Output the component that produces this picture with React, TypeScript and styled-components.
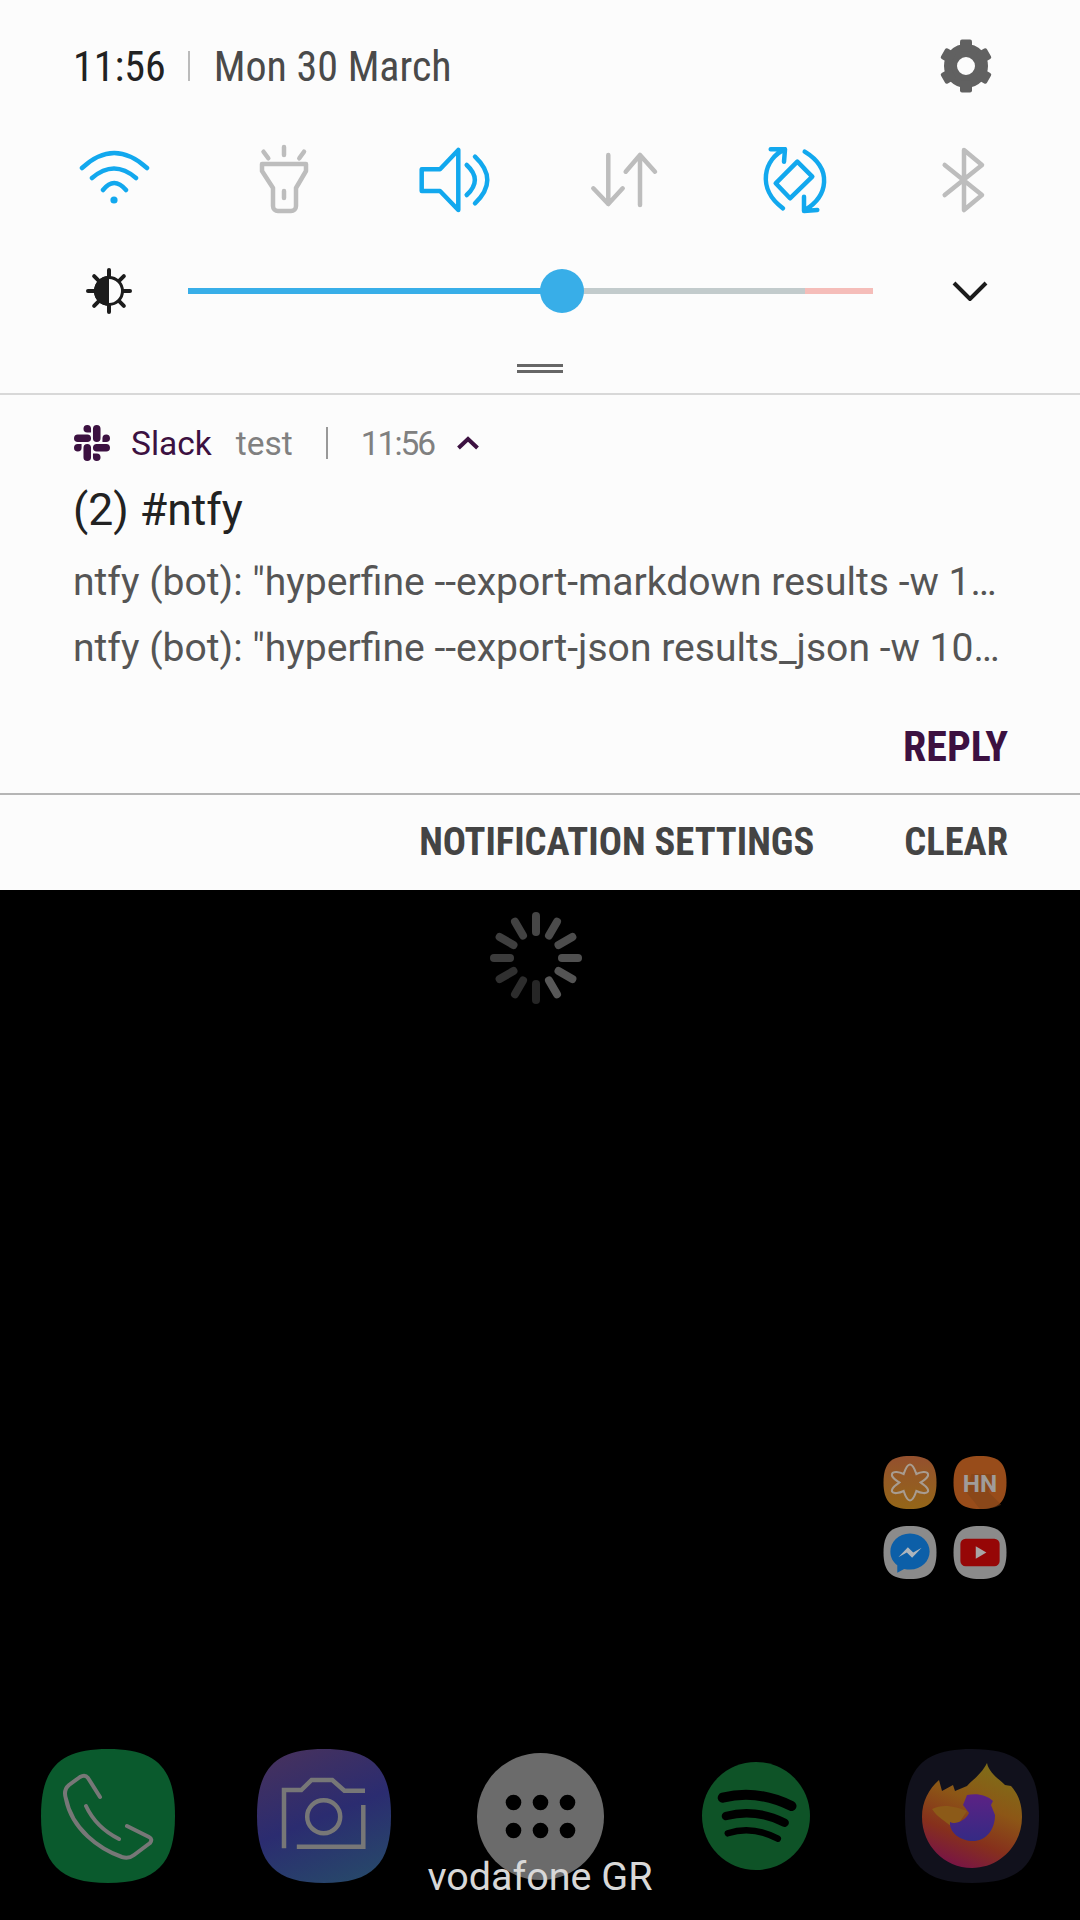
import React from "react";
import styled, { createGlobalStyle } from "styled-components";
import { SiSlack } from "react-icons/si";

const Global = createGlobalStyle`
  html, body { margin: 0; padding: 0; background: #000; }
  body { font-family: Roboto, "Liberation Sans", sans-serif; }
`;

const Screen = styled.div`
  width: 1080px;
  height: 1920px;
  display: flex;
  flex-direction: column;
  overflow: hidden;
  position: relative;
`;

const Panel = styled.section`
  height: 890px;
  background: #fcfcfc;
  display: flex;
  flex-direction: column;
`;

const Quick = styled.div`
  height: 393px;
  border-bottom: 2px solid #d8d8d8;
  display: flex;
  flex-direction: column;
`;

const StatusRow = styled.div`
  height: 132px;
  display: flex;
  align-items: center;
  padding: 0 88px 0 73px;
`;

const Clock = styled.span`
  font-family: "Roboto Condensed", Roboto, sans-serif;
  font-stretch: 75%;
  font-size: 42px;
  color: #222;
`;

const ThinBar = styled.span`
  width: 2px;
  height: 30px;
  background: #bbb;
  margin: 0 24px 0 22px;
`;

const DateText = styled.span`
  font-family: "Roboto Condensed", Roboto, sans-serif;
  font-stretch: 75%;
  font-size: 42px;
  color: #4a4a4a;
  flex: 1;
`;

const ToggleRow = styled.div`
  display: grid;
  grid-template-columns: repeat(6, 170px);
  padding-left: 29px;
  margin-top: 12px;
  height: 72px;
`;

const ToggleCell = styled.div`
  display: flex;
  justify-content: center;
`;

const BrightnessRow = styled.div`
  height: 60px;
  margin-top: 45px;
  display: flex;
  align-items: center;
  padding-left: 86px;
`;

const Track = styled.div`
  position: relative;
  width: 685px;
  height: 6px;
  margin: 0 79px 0 56px;
  flex: none;
  background: linear-gradient(
    to right,
    #38aee8 0 374px,
    #c2cbcc 374px 617px,
    #f5bdb9 617px 685px
  );
`;

const Thumb = styled.span`
  position: absolute;
  left: 352px;
  top: -19px;
  width: 44px;
  height: 44px;
  border-radius: 50%;
  background: #38aee8;
`;

const HandleWrap = styled.div`
  margin-top: 43px;
  display: flex;
  justify-content: center;
`;

const Handle = styled.span`
  width: 46px;
  height: 3px;
  border-top: 3px solid #666;
  border-bottom: 3px solid #666;
`;

const Note = styled.article`
  height: 398px;
  border-bottom: 2px solid #b5b5b5;
  padding: 0 72px 0 73px;
  box-sizing: content-box;
  display: flex;
  flex-direction: column;
`;

const NoteHead = styled.div`
  display: flex;
  align-items: center;
  height: 48px;
  margin-top: 24px;
  font-size: 33.500px;
`;

const SlackName = styled.span`
  color: #3c1141;
  margin-left: 21px;
`;

const Muted = styled.span`
  color: #808080;
  margin-left: 24px;
`;

const NoteBar = styled.span`
  width: 2px;
  height: 32px;
  background: #999;
  margin: 0 33px 0 33px;
`;

const NoteTime = styled.span`
  color: #808080;
  letter-spacing: -2px;
`;

const Title = styled.h1`
  margin: 18px 0 0;
  font-weight: 400;
  font-size: 44.500px;
  line-height: 50px;
  color: #222;
`;

const Line = styled.p<{ $gap: number }>`
  margin: ${(p) => p.$gap}px 0 0;
  font-size: 39.100px;
  line-height: 44px;
  color: #555;
  white-space: nowrap;
`;

const ReplyRow = styled.div`
  display: flex;
  justify-content: flex-end;
  margin-top: 55px;
`;

const ActionText = styled.span<{ $color: string; $size: number }>`
  font-size: ${(p) => p.$size}px;
  font-weight: 700;
  line-height: 44px;
  color: ${(p) => p.$color};
  font-stretch: 75%;
  font-family: "Roboto Condensed", Roboto, sans-serif;
`;

const Footer = styled.div`
  flex: 1;
  display: flex;
  align-items: center;
  justify-content: flex-end;
  gap: 90px;
  padding: 0 72px 2px 0;
`;

const Lock = styled.section`
  flex: 1;
  background: #000;
  display: flex;
  flex-direction: column;
`;

const SpinnerSvg = styled.svg`
  display: block;
  flex: none;
  margin: 22px 0 0 490px;
`;

const Folder = styled.div`
  margin: 452px 73px 0 auto;
  display: grid;
  grid-template-columns: repeat(2, 54px);
  grid-auto-rows: 53px;
  gap: 17px 16px;
`;

const Dock = styled.div`
  margin-top: 170px;
  height: 134px;
  display: grid;
  grid-template-columns: repeat(5, 216px);
  justify-items: center;
  align-items: center;
`;

const Carrier = styled.div`
  position: absolute;
  left: 0;
  right: 0;
  top: 1853px;
  text-align: center;
  font-size: 39.500px;
  line-height: 48px;
  color: #d8d8d8;
`;

const Squircle = "M50 0C86 0 100 14 100 50S86 100 50 100 0 86 0 50 14 0 50 0Z";

const Blue = { fill: "none", stroke: "#12a8ee", strokeWidth: 4.5, strokeLinecap: "round", strokeLinejoin: "round" } as const;
const Gray = { fill: "none", stroke: "#bdbdbd", strokeWidth: 4.5, strokeLinecap: "round", strokeLinejoin: "round" } as const;

const Gear = () => (
  <svg width="52" height="56" viewBox="-26 -28 52 56">
    <circle r="15.5" fill="none" stroke="#616161" strokeWidth="13" />
    {[0, 60, 120, 180, 240, 300].map((a) => (
      <rect key={a} x="-6" y="-26.5" width="12" height="12" rx="2" fill="#616161" transform={`rotate(${a})`} />
    ))}
  </svg>
);

const Toggles = [
  <svg key="w" width="72" height="72" viewBox="0 0 72 72">
    <path {...Blue} d="M4 24Q36 -6 69 24M14 34Q36 15 58 34M25 46Q36 32 48 46" />
    <circle cx="36" cy="56" r="3.6" fill="#12a8ee" />
  </svg>,
  <svg key="f" width="72" height="72" viewBox="0 0 72 72">
    <path {...Gray} d="M14 20H58V27L48 44V62a5 5 0 0 1-5 5H30a5 5 0 0 1-5-5V44L14 27ZM36 47V54M36 3V11M15.500 7.700L20.300 14.300M56 7.700L51.300 14.300" />
  </svg>,
  <svg key="v" width="72" height="72" viewBox="0 0 72 72">
    <path {...Blue} d="M3.700 25.300H22L40.300 6V66L22 47H3.700ZM48.700 21Q65 36 48.700 51M57 12.700Q81.600 36 57 59.300" />
  </svg>,
  <svg key="a" width="72" height="72" viewBox="0 0 72 72">
    <path {...Gray} d="M20.300 11V60M5.300 44.300L20.300 60 34.700 44.300M52 61V11M37.700 27.700L52 11 67 27.700" />
  </svg>,
  <svg key="r" width="72" height="72" viewBox="0 0 72 72">
    <path {...Blue} d="M27 5.300C6 14 -2 45 25 64.300M12.700 5.300H27L26 17.700M46.700 7.700C75 25 70 52 47 66M46 52.700V67L59.300 66M17.700 39.300L39.300 17.700 54.300 32.700 32 54.300Z" />
  </svg>,
  <svg key="b" width="72" height="72" viewBox="0 0 72 72">
    <path {...Gray} d="M16.700 21L54 51 36 66V6L54 21 16.700 51" />
  </svg>,
];

const BrightnessIcon = () => (
  <svg width="46" height="46" viewBox="-23 -23 46 46">
    <g stroke="#1c1c1c" strokeWidth="4" strokeLinecap="round">
      {[0, 45, 90, 135, 180, 225, 270, 315].map((a) => (
        <line key={a} y1="-14" y2="-21" transform={`rotate(${a})`} />
      ))}
    </g>
    <circle r="13.500" fill="#fcfcfc" stroke="#1c1c1c" strokeWidth="3" />
    <path d="M0 -15A15 15 0 0 0 0 15Z" fill="#1c1c1c" />
  </svg>
);

const Chevron = () => (
  <svg width="36" height="20" viewBox="0 0 36 20">
    <path d="M2 2L18 18 34 2" fill="none" stroke="#1c1c1c" strokeWidth="4" />
  </svg>
);

const UpChevronSvg = styled.svg`
  margin-left: 22px;
`;

const UpChevron = () => (
  <UpChevronSvg width="24" height="14" viewBox="0 0 24 14">
    <path d="M2.500 12L12 3 21.500 12" fill="none" stroke="#3c1141" strokeWidth="4" />
  </UpChevronSvg>
);

const SlackMark = styled(SiSlack)`
  margin-left: 1px;
`;

const Spinner = () => {
  const shades = ["#464646", "#4b4b4b", "#4d4d4d", "#505050", "#545454", "#585858", "#262626", "#2d2d2d", "#303030", "#3b3b3b", "#3f3f3f", "#424242"];
  return (
    <SpinnerSvg width="92" height="92" viewBox="-46 -46 92 92">
      {shades.map((c, i) => (
        <line key={i} y1="-26" y2="-42" stroke={c} strokeWidth="8" strokeLinecap="round" transform={`rotate(${i * 30})`} />
      ))}
    </SpinnerSvg>
  );
};

const Flower = () => (
  <svg width="54" height="53" viewBox="0 0 100 100">
    <defs>
      <linearGradient id="fl" x1="0" y1="0" x2="0" y2="1">
        <stop offset="0" stopColor="#94502e" />
        <stop offset="1" stopColor="#946618" />
      </linearGradient>
    </defs>
    <path d={Squircle} fill="url(#fl)" />
    <path
      d="M50 16C56 16 60 28 62 34C70 30 82 28 84 34C86 41 76 46 70 50C76 55 86 60 84 67C81 72 70 70 62 66C60 72 56 84 50 84C44 84 40 72 38 66C30 70 19 72 16 67C14 60 24 55 30 50C24 46 14 41 16 34C18 28 30 30 38 34C40 28 44 16 50 16Z"
      fill="none"
      stroke="#a89c90"
      strokeWidth="4"
    />
  </svg>
);

const HnSvg = styled.svg`
  display: block;
`;

const HnText = styled.text`
  font-family: Roboto, sans-serif;
  font-weight: 700;
  font-size: 46px;
  fill: #a09c99;
`;

const Hn = () => (
  <HnSvg width="54" height="53" viewBox="0 0 100 100">
    <path d={Squircle} fill="#984c1a" />
    <path d="M24 68L34 34 76 34 66 68 90 92C80 98 65 100 50 100Z" fill="#7c4218" opacity="0.5" />
    <HnText x="50" y="67" textAnchor="middle">HN</HnText>
  </HnSvg>
);

const Messenger = () => (
  <svg width="54" height="53" viewBox="0 0 100 100">
    <path d={Squircle} fill="#8b8b8b" />
    <path d="M50 14C28 14 13 30 13 48C13 59 18 68 26 74V88L39 81C43 82 46 82 50 82C72 82 87 66 87 48C87 30 72 14 50 14Z" fill="#0c5fa8" />
    <path d="M28 59L46 40 56 50 72 41 54 60 44 50Z" fill="#aeb5bc" />
  </svg>
);

const Youtube = () => (
  <svg width="54" height="53" viewBox="0 0 100 100">
    <path d={Squircle} fill="#8b8b8b" />
    <rect x="13" y="24" width="74" height="52" rx="10" fill="#960606" />
    <path d="M42 38L62 50 42 62Z" fill="#a9a5a5" />
  </svg>
);

const Phone = () => (
  <svg width="134" height="134" viewBox="0 0 134 134">
    <path d={Squircle} transform="scale(1.34)" fill="#0a5a2d" />
    <path
      d="M59 48L47 29Q44 25 39 28L28 36Q22 41 25 50C31 80 58 100 81 108Q88 110 93 106L109 94Q112 90 108 88L86 77M45 57C52 72 62 82 78 90"
      fill="none"
      stroke="#777"
      strokeWidth="4"
      strokeLinecap="round"
      strokeLinejoin="round"
    />
  </svg>
);

const Camera = () => (
  <svg width="134" height="134" viewBox="0 0 134 134">
    <defs>
      <linearGradient id="cam" x1="0.3" y1="0" x2="0.7" y2="1">
        <stop offset="0" stopColor="#44315f" />
        <stop offset="0.5" stopColor="#2b2c70" />
        <stop offset="1" stopColor="#27476a" />
      </linearGradient>
    </defs>
    <path d={Squircle} transform="scale(1.34)" fill="url(#cam)" />
    <g fill="none" stroke="#777" strokeWidth="4.500">
      <path d="M27 99.300V41H44.300L54.600 31H75.300L87.400 41.700H108M106.300 56V97.700H39.800" />
      <circle cx="66.700" cy="67.700" r="16.500" />
    </g>
  </svg>
);

const Apps = () => (
  <svg width="127" height="127" viewBox="0 0 127 127">
    <circle cx="63.500" cy="63.500" r="63.500" fill="#6b6b6b" />
    {[36.500, 63.500, 90.500].map((x) =>
      [49.500, 77.500].map((y) => <circle key={`${x}-${y}`} cx={x} cy={y} r="7.800" fill="#000" />),
    )}
  </svg>
);

const Spotify = () => (
  <svg width="108" height="108" viewBox="0 0 108 108">
    <circle cx="54" cy="54" r="54" fill="#0e5327" />
    <g fill="none" stroke="#000" strokeLinecap="round">
      <path d="M20.700 35.700Q55 27 89.500 44" strokeWidth="10" />
      <path d="M24 54Q53 46 82.600 60.700" strokeWidth="8.500" />
      <path d="M25.800 71.300Q50 63 75.800 76.700" strokeWidth="6.500" />
    </g>
  </svg>
);

const Firefox = () => (
  <svg width="134" height="134" viewBox="0 0 134 134">
    <defs>
      <linearGradient id="ffa" x1="0.75" y1="0" x2="0.35" y2="1">
        <stop offset="0" stopColor="#7e7018" />
        <stop offset="0.4" stopColor="#8c5616" />
        <stop offset="0.72" stopColor="#86301c" />
        <stop offset="1" stopColor="#781446" />
      </linearGradient>
      <linearGradient id="ffb" x1="0.5" y1="0" x2="0.5" y2="1">
        <stop offset="0" stopColor="#5c2284" />
        <stop offset="1" stopColor="#352a84" />
      </linearGradient>
    </defs>
    <path d={Squircle} transform="scale(1.34)" fill="#11111c" />
    <path
      d="M82 14C84 24 94 30 100 36L106 37C114 46 117 56 117 68C117 96 95 119 67 119C39 119 17 96 17 68C17 52 24 40 34 31L37 42L48 36L50 42L62 37C66 32 76 26 82 14Z"
      fill="url(#ffa)"
    />
    <path d="M27 60C38 54 52 58 62 62L50 80C40 72 32 68 27 60Z" fill="#8c5a18" />
    <path
      d="M62 46C72 44 82 46 88 52L86 56L90 66C90 82 80 92 68 92C56 92 44 84 45 73C50 76 60 72 64 64L58 56Z"
      fill="url(#ffb)"
    />
  </svg>
);

export default function App() {
  return (
    <Screen>
      <Global />
      <Panel>
        <Quick>
          <StatusRow>
            <Clock>11:56</Clock>
            <ThinBar />
            <DateText>Mon 30 March</DateText>
            <Gear />
          </StatusRow>
          <ToggleRow>
            {Toggles.map((t, i) => (
              <ToggleCell key={i}>{t}</ToggleCell>
            ))}
          </ToggleRow>
          <BrightnessRow>
            <BrightnessIcon />
            <Track>
              <Thumb />
            </Track>
            <Chevron />
          </BrightnessRow>
          <HandleWrap>
            <Handle />
          </HandleWrap>
        </Quick>
        <Note>
          <NoteHead>
            <SlackMark size={36} color="#3c1141" />
            <SlackName>Slack</SlackName>
            <Muted>test</Muted>
            <NoteBar />
            <NoteTime>11:56</NoteTime>
            <UpChevron />
          </NoteHead>
          <Title>(2) #ntfy</Title>
          <Line $gap={25}>ntfy (bot): "hyperfine --export-markdown results -w 1…</Line>
          <Line $gap={22}>ntfy (bot): "hyperfine --export-json results_json -w 10…</Line>
          <ReplyRow>
            <ActionText $color="#3c1141" $size={42}>REPLY</ActionText>
          </ReplyRow>
        </Note>
        <Footer>
          <ActionText $color="#444" $size={38.6}>NOTIFICATION SETTINGS</ActionText>
          <ActionText $color="#444" $size={38.6}>CLEAR</ActionText>
        </Footer>
      </Panel>
      <Lock>
        <Spinner />
        <Folder>
          <Flower />
          <Hn />
          <Messenger />
          <Youtube />
        </Folder>
        <Dock>
          <Phone />
          <Camera />
          <Apps />
          <Spotify />
          <Firefox />
        </Dock>
      </Lock>
      <Carrier>vodafone GR</Carrier>
    </Screen>
  );
}
